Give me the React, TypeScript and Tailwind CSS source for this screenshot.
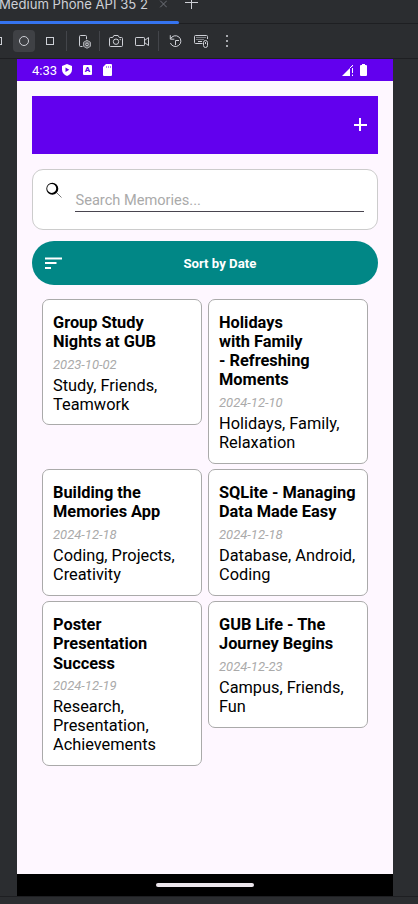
import React from 'react';

type Memory = { title: string[]; date: string; tags: string[] };

const memories: Memory[] = [
  { title: ['Group Study', 'Nights at GUB'], date: '2023-10-02', tags: ['Study, Friends,', 'Teamwork'] },
  { title: ['Holidays', 'with Family', '- Refreshing', 'Moments'], date: '2024-12-10', tags: ['Holidays, Family,', 'Relaxation'] },
  { title: ['Building the', 'Memories App'], date: '2024-12-18', tags: ['Coding, Projects,', 'Creativity'] },
  { title: ['SQLite - Managing', 'Data Made Easy'], date: '2024-12-18', tags: ['Database, Android,', 'Coding'] },
  { title: ['Poster', 'Presentation', 'Success'], date: '2024-12-19', tags: ['Research,', 'Presentation,', 'Achievements'] },
  { title: ['GUB Life - The', 'Journey Begins'], date: '2024-12-23', tags: ['Campus, Friends,', 'Fun'] },
];

function TabBar() {
  return (
    <div className="h-6 shrink-0">
      <div className="flex h-[21px] items-start">
        <span className="-mt-[6px] -ml-[1px] w-[160px] whitespace-nowrap font-['Inter',sans-serif] text-[13.1px] leading-5 text-[#ced0d6]">
          Medium Phone API 35 2
        </span>
        <svg className="h-2 w-2 shrink-0" viewBox="0 0 8 8" fill="none" stroke="#70737a" strokeWidth="1">
          <path d="M1.200.7l6.600 6.600M7.800.7L1.200 7.300" />
        </svg>
        <svg className="ml-[18px] h-[9px] w-[13px] shrink-0" viewBox="0 0 13 9" fill="none" stroke="#ced0d6" strokeWidth="1">
          <path d="M0 2.500h13M6.500 -4v13" />
        </svg>
      </div>
      <div className="flex h-[3px]">
        <div className="w-[179px] rounded-r-sm bg-[#3574f0]" />
        <div className="flex-1 border-b border-[#1e1f22]" />
      </div>
    </div>
  );
}

function Separator({ className }: { className: string }) {
  return <div className={`h-5 w-px shrink-0 bg-[#43454a] ${className}`} />;
}

function Toolbar() {
  return (
    <div className="flex h-[35px] shrink-0 items-center border-b border-[#1e1f22] text-[#ced0d6]">
      <div className="h-2 w-[2px] shrink-0 border border-l-0 border-current" />
      <div className="ml-[11px] flex h-[22px] w-[22px] shrink-0 items-center justify-center rounded-[4px] bg-[#3f4145]">
        <div className="h-[10px] w-[10px] rounded-full border border-current" />
      </div>
      <div className="ml-[11px] h-2 w-2 shrink-0 border border-current" />
      <Separator className="ml-3" />
      <svg className="ml-3 h-4 w-[14px] shrink-0" viewBox="0 0 14 16" fill="none" stroke="currentColor">
        <path d="M3.500 13.500h-2a1 1 0 0 1-1-1v-9a1 1 0 0 1 1-1h5a1 1 0 0 1 1 1v2.700" />
        <path d="M8 7.300l3.500 2v4L8 15.300l-3.500-2v-4z" stroke="#a7a9ae" fill="#65676b" />
        <circle cx="8" cy="11.300" r="1.300" fill="#2b2d30" />
      </svg>
      <Separator className="ml-[6px]" />
      <svg className="ml-[9px] h-4 w-4 shrink-0" viewBox="0 0 16 16" fill="none" stroke="currentColor">
        <path d="M1.500 4.500h2.200l1.200-2h4.200l1.200 2h2.200a1 1 0 0 1 1 1v7a1 1 0 0 1-1 1h-11a1 1 0 0 1-1-1v-7a1 1 0 0 1 1-1z" />
        <circle cx="7" cy="8.700" r="2.700" />
        <circle cx="11.200" cy="6.500" r=".3" />
      </svg>
      <svg className="ml-[9px] h-4 w-4 shrink-0" viewBox="0 0 16 16" fill="none" stroke="currentColor">
        <rect x="1.500" y="4.500" width="9" height="8" rx=".7" />
        <path d="M10.500 7.500l4-3v8l-4-3" />
      </svg>
      <Separator className="ml-2" />
      <svg className="ml-[10px] h-4 w-[14px] shrink-0" viewBox="0 0 14 16" fill="none" stroke="currentColor">
        <path d="M1.300 2.200v4h4M1.500 6a5.400 5.400 0 1 1-.1 4" />
        <path d="M6.500 12V7.500H10" />
      </svg>
      <svg className="ml-[11px] h-4 w-4 shrink-0" viewBox="0 0 16 16" fill="none" stroke="currentColor">
        <path d="M8.500 10.500h-7a1 1 0 0 1-1-1v-6a1 1 0 0 1 1-1h11a1 1 0 0 1 1 1V6" />
        <path d="M2.500 4.500h9M2.500 6.500h7" strokeDasharray="1 1" />
        <path d="M4 8.500h4" />
        <rect x="9.500" y="7.500" width="4" height="7" rx="2" />
        <path d="M11.500 9v2" />
      </svg>
      <div className="ml-4 flex shrink-0 flex-col gap-[3px]">
        <i className="h-[2px] w-[2px] bg-[#a7a9ae]" />
        <i className="h-[2px] w-[2px] bg-[#a7a9ae]" />
        <i className="h-[2px] w-[2px] bg-[#a7a9ae]" />
      </div>
    </div>
  );
}

function StatusBar() {
  return (
    <div className="flex h-[22px] shrink-0 items-center bg-[#6200ee] pl-[15px] text-white">
      <span className="w-[30px] text-[13px] leading-none">4:33</span>
      <svg className="h-3 w-[10px]" viewBox="0 0 10 12">
        <path d="M5 0l5 1.900v3.600C10 8.600 7.900 11 5 12 2.100 11 0 8.600 0 5.500V1.900z" fill="white" />
        <path d="M3.500 3.600v4.400L7.300 5.800z" fill="#6200ee" />
      </svg>
      <span className="ml-[11px] flex h-[10px] w-[9px] items-center justify-center rounded-[1px] bg-white text-[8px] leading-none font-black text-[#6200ee]">
        A
      </span>
      <svg className="ml-[11px] h-3 w-[9px]" viewBox="0 0 9 12">
        <path d="M3 0h5a1 1 0 0 1 1 1v10a1 1 0 0 1-1 1H1a1 1 0 0 1-1-1V3z" fill="white" />
        <path d="M3.500 2v2M5.500 2v2M7.500 2v2" stroke="#6200ee" strokeWidth=".5" />
      </svg>
      <svg className="mr-[7px] ml-auto h-[11px] w-[11px]" viewBox="0 0 11 11">
        <path d="M0 11L8 3v8z" fill="white" />
        <path d="M8 3l3-3v1.500M10.500 3v5M10.500 9.500v1.500" stroke="white" fill="none" />
      </svg>
      <svg className="mr-[26px] h-3 w-[7px]" viewBox="0 0 7 12">
        <path d="M2 0h3v1h1a1 1 0 0 1 1 1v9a1 1 0 0 1-1 1H1a1 1 0 0 1-1-1V2a1 1 0 0 1 1-1h1z" fill="white" />
      </svg>
    </div>
  );
}

function MemoryCard({ memory }: { memory: Memory }) {
  return (
    <article className="w-40 rounded-[7px] border border-[#aaaaaa] bg-white pt-[13px] pb-[10.4px] pl-[10px] text-[16.35px] leading-[19.15px] whitespace-nowrap text-black">
      <h2 className="font-bold">
        {memory.title.map((line) => (
          <div key={line}>{line}</div>
        ))}
      </h2>
      <p className="mt-[4.6px] mb-[2.8px] text-[13px] leading-[17px] text-[#aaaaaa] italic">{memory.date}</p>
      <div>
        {memory.tags.map((line) => (
          <div key={line}>{line}</div>
        ))}
      </div>
    </article>
  );
}

export default function App() {
  return (
    <div className="flex h-[904px] w-[418px] flex-col overflow-hidden bg-[#2b2d30] font-['Roboto',sans-serif]">
      <TabBar />
      <Toolbar />
      <main className="ml-[17px] flex h-[837px] w-[376px] shrink-0 flex-col bg-[#fef7ff]">
        <StatusBar />
        <div className="flex flex-1 flex-col px-[15px] pt-[15px]">
          <header className="flex h-[58px] items-center justify-end bg-[#6200ee] pr-[11px]">
            <svg className="mb-px h-[13px] w-[13px]" viewBox="0 0 13 13" stroke="white" strokeWidth="2">
              <path d="M0 7h13M6 0v13" />
            </svg>
          </header>
          <div className="mt-[15px] flex h-[61px] items-start rounded-[11px] border border-[#cccccc] bg-white pt-[12px] pl-[13px]">
            <svg className="h-4 w-4" viewBox="0 0 16 16">
              <path fillRule="evenodd" d="M6.300.700a6 6 0 1 1 0 12 6 6 0 0 1 0-12zM5.700 1.900a4.500 4.500 0 1 0 0 9 4.500 4.500 0 0 0 0-9z" fill="black" />
              <path d="M11 11l4.500 4.500" stroke="#555" strokeWidth=".8" />
            </svg>
            <div className="ml-[13px] h-[30px] w-[289px] border-b border-[#49454f] pt-[9px] pl-[0.5px] text-[14.6px] leading-[18px] text-[#aaaaaa]">
              Search Memories...
            </div>
          </div>
          <button className="mt-[11px] flex h-11 w-[346px] shrink-0 items-center rounded-full bg-[#018786] pl-[13px] text-white">
            <svg className="h-3 w-[17px]" viewBox="0 0 17 12" stroke="white" strokeWidth="2">
              <path d="M0 1.500h17M0 6h11.500M0 11h6" />
            </svg>
            <span className="ml-[121.4px] pt-[1.4px] text-[13.2px] leading-none font-bold">Sort by Date</span>
          </button>
          <section className="mt-[14px] ml-[10px] grid grid-cols-[160px_160px] items-start gap-x-[6px] gap-y-[5.6px]">
            {memories.map((memory) => (
              <MemoryCard key={memory.title[0]} memory={memory} />
            ))}
          </section>
        </div>
        <footer className="flex h-[22px] shrink-0 items-center justify-center bg-black">
          <div className="h-1 w-[98px] rounded-full bg-[#ece6ec]" />
        </footer>
      </main>
      <div className="h-2 border-t border-[#1e1f22]" />
    </div>
  );
}
